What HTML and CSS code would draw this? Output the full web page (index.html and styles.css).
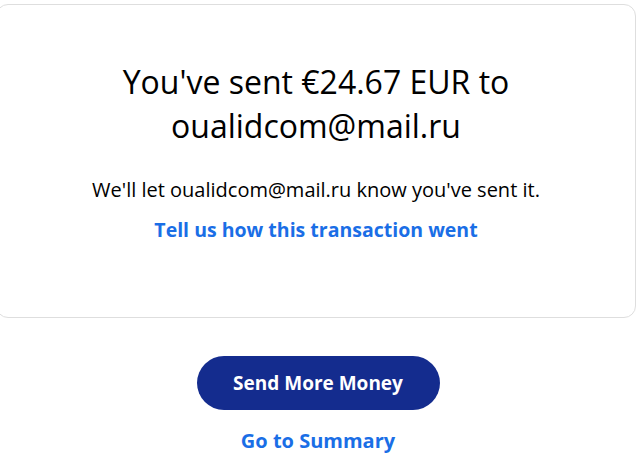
FILE: index.html
```html
<!DOCTYPE html>
<html lang="en">
<head>
<meta charset="utf-8">
<title>Payment sent</title>
<link rel="stylesheet" href="styles.css">
</head>
<body>
<main class="page">
  <section class="card">
    <h1 class="title">You've sent €24.67 EUR to oualidcom@mail.ru</h1>
    <p class="note">We'll let oualidcom@mail.ru know you've sent it.</p>
    <a class="link" href="#">Tell us how this transaction went</a>
  </section>
  <div class="actions">
    <button class="primary" type="button">Send More Money</button>
    <a class="link summary" href="#">Go to Summary</a>
  </div>
</main>
</body>
</html>
```
FILE: styles.css
```css
html, body {
  margin: 0;
  padding: 0;
  background: #ffffff;
}
body {
  font-family: "Open Sans", sans-serif;
  color: #000000;
}
.page {
  width: 640px;
  padding-top: 4px;
}
.card {
  margin-left: -4px;
  width: 640px;
  height: 314px;
  box-sizing: border-box;
  border: 1px solid #dedede;
  border-radius: 12px;
  display: flex;
  flex-direction: column;
  align-items: center;
  text-align: center;
  padding-top: 55px;
}
.title {
  margin: 0;
  width: 440px;
  font-size: 32px;
  line-height: 44px;
  font-weight: 400;
}
.note {
  margin: 29px 0 0;
  font-size: 20px;
  line-height: 26px;
}
.link {
  color: #1a6ee6;
  font-weight: 700;
  font-size: 19.5px;
  line-height: 26px;
  text-decoration: none;
  margin-top: 14px;
}
.actions {
  display: flex;
  flex-direction: column;
  align-items: center;
  padding-top: 38px;
  margin-left: -4px;
}
.primary {
  width: 243px;
  height: 54px;
  border: none;
  border-radius: 27px;
  background: #142c8e;
  color: #ffffff;
  font-family: "Open Sans", sans-serif;
  font-weight: 700;
  font-size: 19px;
}
.actions .summary {
  margin-top: 18px;
  font-size: 20px;
}
```
